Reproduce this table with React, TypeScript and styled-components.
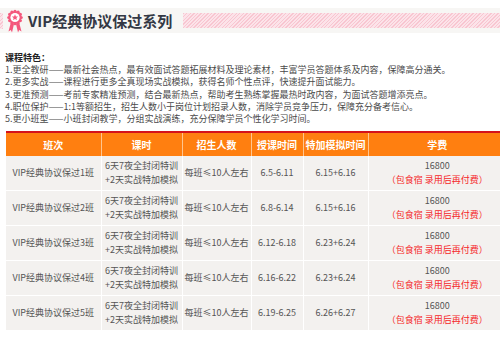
import styled, { createGlobalStyle } from 'styled-components';

const GlobalStyle = createGlobalStyle`
  html, body {
    margin: 0;
    padding: 0;
    overflow: hidden;
    background: #fff;
    font-family: "Noto Sans CJK SC", "Noto Sans", sans-serif;
  }
`;

const Page = styled.div`
  width: 500px;
  overflow: hidden;
`;

const TitleBar = styled.div`
  margin-top: 8px;
  height: 25px;
  background: #f7f6f4;
  display: flex;
  align-items: center;
`;

const pinkStripes = `
  repeating-linear-gradient(
    135deg,
    #f8c6d1 0px,
    #f8c6d1 1px,
    #fce3e9 1px,
    #fce3e9 2.5px
  )
`;

const EdgeStripe = styled.div`
  width: 3px;
  height: 16px;
  background: ${pinkStripes};
`;

const Badge = styled.svg`
  margin-left: 3px;
  flex: none;
`;

const Title = styled.h1`
  margin: 0 0 0 4px;
  font-size: 15px;
  font-weight: 700;
  color: #333844;
  line-height: 25px;
  white-space: nowrap;
`;

const StripeBar = styled.div`
  flex: 1;
  height: 15px;
  margin-left: 11px;
  background: ${pinkStripes};
`;

const Features = styled.div`
  margin-top: 19px;
  padding: 0 5px;
  font-size: 9px;
  line-height: 12.2px;
  color: #4a4a4a;
  white-space: nowrap;
`;

const FeatureHead = styled.div`
  font-weight: 700;
  color: #222;
`;

const Table = styled.table`
  margin: 6px 0 0 6px;
  width: 500px;
  border-collapse: collapse;
  table-layout: fixed;
  border-top: 2px solid #d4121c;
`;

const Th = styled.th`
  height: 23px;
  padding: 0;
  background: #ff7f10;
  color: #fff;
  font-size: 10px;
  font-weight: 700;
  text-align: center;
  border-left: 1px solid #ffc58f;
  &:first-child {
    border-left: none;
  }
`;

const Td = styled.td`
  height: 34px;
  padding: 0;
  background: #f3f1ef;
  color: #555;
  font-size: 9px;
  line-height: 14px;
  text-align: center;
  border-left: 1px solid #fff;
  border-bottom: 1px solid #fff;
  &:first-child {
    border-left: none;
  }
`;

const Fee = styled.span<{ $red?: boolean }>`
  display: block;
  color: ${(p) => (p.$red ? '#f5282a' : '#555')};
`;

const features = [
  '1.更全教研——最新社会热点，最有效面试答题拓展材料及理论素材，丰富学员答题体系及内容，保障高分通关。',
  '2.更多实战——课程进行更多全真现场实战模拟，获得名师个性点评，快速提升面试能力。',
  '3.更准预测——考前专家精准预测，结合最新热点，帮助考生熟练掌握最热时政内容，为面试答题增添亮点。',
  '4.职位保护——1:1等额招生，招生人数小于岗位计划招录人数，消除学员竞争压力，保障充分备考信心。',
  '5.更小班型——小班封闭教学，分组实战演练，充分保障学员个性化学习时间。',
];

const rows = [
  { n: 1, dates: '6.5-6.11', mock: '6.15+6.16' },
  { n: 2, dates: '6.8-6.14', mock: '6.15+6.16' },
  { n: 3, dates: '6.12-6.18', mock: '6.23+6.24' },
  { n: 4, dates: '6.16-6.22', mock: '6.23+6.24' },
  { n: 5, dates: '6.19-6.25', mock: '6.26+6.27' },
];

function RosetteIcon() {
  const scallops = Array.from({ length: 12 }, (_, i) => {
    const a = (i / 12) * Math.PI * 2;
    return <circle key={i} cx={9 + Math.cos(a) * 6.2} cy={8.5 + Math.sin(a) * 6.2} r={1.6} fill="#f4587c" />;
  });
  return (
    <Badge width="18" height="24" viewBox="0 0 18 24">
      <path d="M5 13 L2.5 22.5 L4.8 21 L6 23.5 L8 15 Z" fill="#f4587c" />
      <path d="M13 13 L15.5 22.5 L13.2 21 L12 23.5 L10 15 Z" fill="#f4587c" />
      {scallops}
      <circle cx="9" cy="8.5" r="6.3" fill="#f4587c" />
      <circle cx="9" cy="8.5" r="4.6" fill="#fff" />
      <path
        d="M9 5.3 L9.9 7.4 L12.1 7.5 L10.4 8.9 L11 11.1 L9 9.9 L7 11.1 L7.6 8.9 L5.9 7.5 L8.1 7.4 Z"
        fill="#f4587c"
      />
    </Badge>
  );
}

export default function App() {
  return (
    <Page>
      <GlobalStyle />
      <TitleBar>
        <EdgeStripe />
        <RosetteIcon />
        <Title>VIP经典协议保过系列</Title>
        <StripeBar />
      </TitleBar>

      <Features>
        <FeatureHead>课程特色：</FeatureHead>
        {features.map((f) => (
          <div key={f}>{f}</div>
        ))}
      </Features>

      <Table>
        <colgroup>
          <col style={{ width: 95 }} />
          <col style={{ width: 81 }} />
          <col style={{ width: 69 }} />
          <col style={{ width: 52 }} />
          <col style={{ width: 65 }} />
          <col style={{ width: 138 }} />
        </colgroup>
        <thead>
          <tr>
            <Th>班次</Th>
            <Th>课时</Th>
            <Th>招生人数</Th>
            <Th>授课时间</Th>
            <Th>特加模拟时间</Th>
            <Th>学费</Th>
          </tr>
        </thead>
        <tbody>
          {rows.map((r) => (
            <tr key={r.n}>
              <Td>VIP经典协议保过{r.n}班</Td>
              <Td>
                6天7夜全封闭特训
                <br />
                +2天实战特加模拟
              </Td>
              <Td>每班≤10人左右</Td>
              <Td>{r.dates}</Td>
              <Td>{r.mock}</Td>
              <Td>
                <Fee>16800</Fee>
                <Fee $red>（包食宿 录用后再付费）</Fee>
              </Td>
            </tr>
          ))}
        </tbody>
      </Table>
    </Page>
  );
}
